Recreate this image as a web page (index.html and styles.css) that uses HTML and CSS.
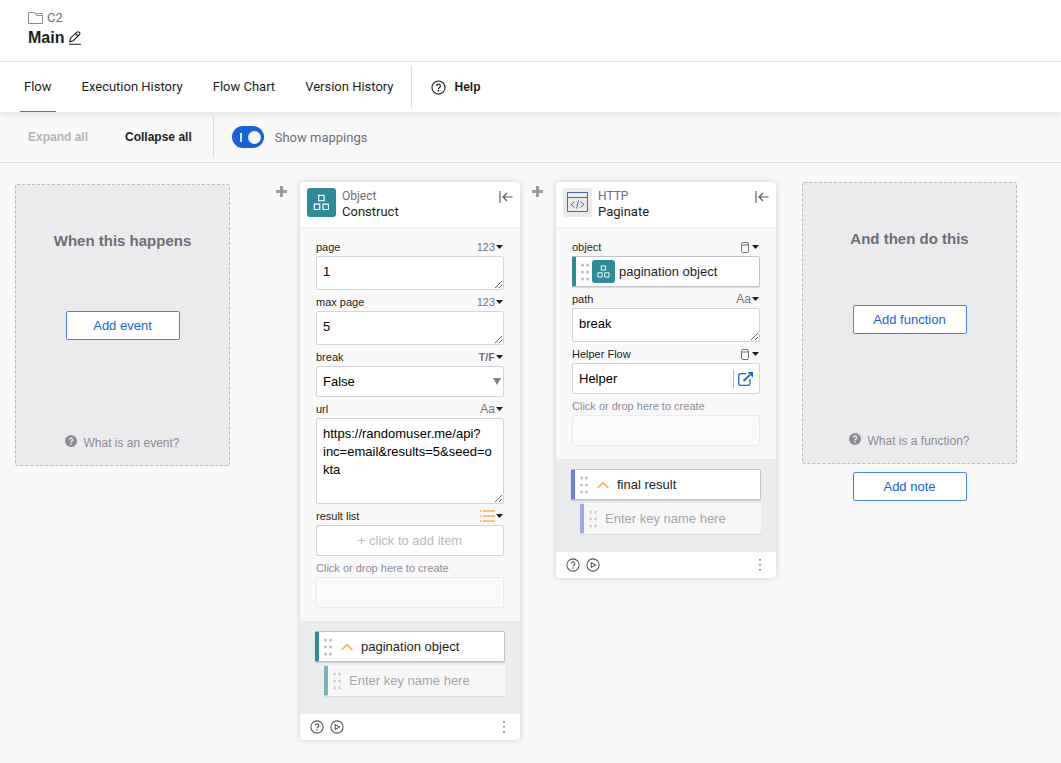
FILE: index.html
```html
<!DOCTYPE html>
<html lang="en">
<head>
  <meta charset="UTF-8">
  <title>Main - Flow</title>
  <link rel="stylesheet" href="styles.css">
</head>
<body>

  <!-- shared icons -->
  <svg class="sprite" aria-hidden="true">
    <symbol id="help" viewBox="0 0 16 16">
      <circle cx="8" cy="8" r="7" fill="none" stroke="currentColor" stroke-width="1.2"/>
      <path d="M6 6.400a2 2 0 1 1 2.900 1.800c-.6.3-.9.6-.9 1.300" fill="none" stroke="currentColor" stroke-width="1.300"/>
      <circle cx="8" cy="11.400" r=".9" fill="currentColor"/>
    </symbol>
    <symbol id="help-solid" viewBox="0 0 16 16">
      <circle cx="8" cy="8" r="8" fill="currentColor"/>
      <path d="M5.800 6.200a2.200 2.200 0 1 1 3.200 2c-.7.3-1 .6-1 1.400" fill="none" stroke="#ebebed" stroke-width="1.800"/>
      <circle cx="8" cy="11.900" r="1.100" fill="#ebebed"/>
    </symbol>
    <symbol id="play" viewBox="0 0 16 16">
      <circle cx="8" cy="8" r="7" fill="none" stroke="currentColor" stroke-width="1.200"/>
      <path d="M6 5.200v5.600L11 8z" fill="none" stroke="currentColor" stroke-width="1.200"/>
    </symbol>
    <symbol id="blocks" viewBox="0 0 30 30">
      <path d="M12.100 7.600h5.600v5.600h-5.600zM7.600 16.600h5.600v5.600H7.600zM16.600 16.600h5.600v5.600h-5.600z" fill="none" stroke="#fff" stroke-width="1.200"/>
    </symbol>
    <symbol id="collapse" viewBox="0 0 14 12">
      <path d="M1 0v12M13.500 6H4M8 2L4 6l4 4" fill="none" stroke="currentColor" stroke-width="1.100"/>
    </symbol>
    <symbol id="plus" viewBox="0 0 11 11">
      <path d="M5.500 0v11M0 5.500h11" stroke="currentColor" stroke-width="3"/>
    </symbol>
    <symbol id="caret" viewBox="0 0 7 4">
      <path d="M0 0h7L3.500 4z" fill="currentColor"/>
    </symbol>
    <symbol id="grip" viewBox="0 0 8 18">
      <g fill="currentColor">
        <circle cx="1.500" cy="2" r="1.500"/><circle cx="6.500" cy="2" r="1.500"/>
        <circle cx="1.500" cy="9" r="1.500"/><circle cx="6.500" cy="9" r="1.500"/>
        <circle cx="1.500" cy="16" r="1.500"/><circle cx="6.500" cy="16" r="1.500"/>
      </g>
    </symbol>
    <symbol id="chevron" viewBox="0 0 12 8">
      <path d="M.6 7L6 1.600 11.400 7" fill="none" stroke="#f9b04f" stroke-width="1.700"/>
    </symbol>
    <symbol id="cylinder" viewBox="0 0 8 11">
      <path d="M.5 1.800v7.700c0 .6.500 1 1.500 1h4c1 0 1.500-.4 1.500-1V1.800c0-.8-.5-1.300-1.500-1.300H2C1 .5.5 1 .5 1.800c0 .7.600 1.200 1.500 1.200h4c.9 0 1.500-.5 1.500-1.200" fill="none" stroke="currentColor"/>
    </symbol>
    <symbol id="dots" viewBox="0 0 2 12">
      <path d="M.3 0h1.400v1.500H.3zM.3 5h1.400v1.500H.3zM.3 10h1.400v1.500H.3z" fill="currentColor"/>
    </symbol>
  </svg>

  <header class="page-header">
    <div class="folder">
      <svg width="15" height="12" viewBox="0 0 15 12" fill="none" stroke="#8c8c8c"><path d="M.5 11.500V.5h6l2 3h6v8z"/><path d="M7 1.500h7.500v2"/></svg>
      <span>C2</span>
    </div>
    <div class="title">
      <h1>Main</h1>
      <button class="icon-btn" aria-label="Rename flow">
        <svg width="12" height="14" viewBox="0 0 12 14" fill="none" stroke="#1d1d21" stroke-width="1.100"><path d="M.8 10.500l.6-3.300L7.700 1.300c.8-.8 1.800-.8 2.600 0s.8 1.700 0 2.500L4 10z"/><path d="M6.500 2.500L9 5M0 13.300h12"/></svg>
      </button>
    </div>
  </header>

  <nav class="tabs">
    <a href="#flow" class="tab active">Flow</a>
    <a href="#history" class="tab">Execution History</a>
    <a href="#chart" class="tab">Flow Chart</a>
    <a href="#versions" class="tab">Version History</a>
    <span class="divider"></span>
    <a href="#help-page" class="help-link"><svg width="15" height="15"><use href="#help"/></svg>Help</a>
  </nav>

  <div class="toolbar">
    <button class="text-btn" disabled>Expand all</button>
    <button class="text-btn">Collapse all</button>
    <span class="divider"></span>
    <input type="checkbox" id="mappings" class="toggle" checked>
    <label for="mappings">Show mappings</label>
  </div>

  <main class="canvas">
    <section class="placeholder event">
      <h2>When this happens</h2>
      <button class="outline-btn">Add event</button>
      <a href="#event-help" class="hint"><svg width="12" height="12"><use href="#help-solid"/></svg>What is an event?</a>
    </section>

    <button class="add-btn" aria-label="Add step"><svg width="11" height="11"><use href="#plus"/></svg></button>

    <article class="card">
      <header class="card-header">
        <svg class="card-icon teal" width="29" height="29"><use href="#blocks"/></svg>
        <div class="card-title">
          <span class="app">Object</span>
          <h3>Construct</h3>
        </div>
        <button class="icon-btn collapse" aria-label="Collapse card"><svg width="14" height="12"><use href="#collapse"/></svg></button>
      </header>

      <div class="card-body">
        <div class="field-head">
          <label for="page">page</label>
          <button class="type">123<svg width="7" height="4"><use href="#caret"/></svg></button>
        </div>
        <textarea id="page" class="box">1</textarea>

        <div class="field-head">
          <label for="maxPage">max page</label>
          <button class="type">123<svg width="7" height="4"><use href="#caret"/></svg></button>
        </div>
        <textarea id="maxPage" class="box">5</textarea>

        <div class="field-head">
          <label for="break">break</label>
          <button class="type bold">T/F<svg width="7" height="4"><use href="#caret"/></svg></button>
        </div>
        <div class="select-wrap">
          <select id="break" class="box">
            <option>False</option>
            <option>True</option>
          </select>
          <svg width="8" height="7" viewBox="0 0 8 7"><path d="M0 0h8L4 7z" fill="#808080"/></svg>
        </div>

        <div class="field-head">
          <label for="url">url</label>
          <button class="type letters">Aa<svg width="7" height="4"><use href="#caret"/></svg></button>
        </div>
        <textarea id="url" class="box tall">https://randomuser.me/api?
inc=email&amp;results=5&amp;seed=o
kta</textarea>

        <div class="field-head">
          <label for="resultList">result list</label>
          <button class="type" aria-label="List type">
            <svg width="15" height="12" viewBox="0 0 15 12" stroke="#f9b04f" stroke-width="1.300"><path d="M3 1h12M3 6h12M3 11h12M0 1h1.500M0 6h1.500M0 11h1.500"/></svg>
            <svg width="7" height="4"><use href="#caret"/></svg>
          </button>
        </div>
        <button id="resultList" class="box add-item">+ click to add item</button>

        <div class="field-head">
          <label for="drop1" class="muted">Click or drop here to create</label>
        </div>
        <input type="text" id="drop1" class="box drop">
      </div>

      <div class="card-output teal-bar">
        <div class="chip">
          <svg class="grip" width="8" height="18"><use href="#grip"/></svg>
          <svg class="chevron" width="12" height="8"><use href="#chevron"/></svg>
          <input type="text" value="pagination object" aria-label="Output name">
        </div>
        <div class="chip child">
          <svg class="grip" width="8" height="18"><use href="#grip"/></svg>
          <input type="text" placeholder="Enter key name here" aria-label="Key name">
        </div>
      </div>

      <footer class="card-footer">
        <button class="icon-btn" aria-label="Help"><svg width="14" height="14"><use href="#help"/></svg></button>
        <button class="icon-btn" aria-label="Run"><svg width="14" height="14"><use href="#play"/></svg></button>
        <button class="icon-btn more" aria-label="More"><svg width="2" height="12"><use href="#dots"/></svg></button>
      </footer>
    </article>

    <button class="add-btn" aria-label="Add step"><svg width="11" height="11"><use href="#plus"/></svg></button>

    <article class="card">
      <header class="card-header">
        <svg class="card-icon gray" width="29" height="29" viewBox="0 0 29 29" fill="none" stroke="#4b68b0"><path d="M4.500 4.500h20v19h-20zM4.500 9.500h20"/><path d="M11.500 13.500L8 16.500l3.500 3M17.500 13.500l3.500 3-3.500 3M15.500 12.500l-2 8"/></svg>
        <div class="card-title">
          <span class="app">HTTP</span>
          <h3>Paginate</h3>
        </div>
        <button class="icon-btn collapse" aria-label="Collapse card"><svg width="14" height="12"><use href="#collapse"/></svg></button>
      </header>

      <div class="card-body">
        <div class="field-head">
          <span>object</span>
          <button class="type" aria-label="Object type"><svg class="db" width="8" height="11"><use href="#cylinder"/></svg><svg width="7" height="4"><use href="#caret"/></svg></button>
        </div>
        <div class="chip mapped teal-bar">
          <svg class="grip" width="8" height="18"><use href="#grip"/></svg>
          <svg class="mini teal" width="23" height="23"><use href="#blocks"/></svg>
          <span>pagination object</span>
        </div>

        <div class="field-head">
          <label for="path">path</label>
          <button class="type letters">Aa<svg width="7" height="4"><use href="#caret"/></svg></button>
        </div>
        <textarea id="path" class="box">break</textarea>

        <div class="field-head">
          <span>Helper Flow</span>
          <button class="type" aria-label="Object type"><svg class="db" width="8" height="11"><use href="#cylinder"/></svg><svg width="7" height="4"><use href="#caret"/></svg></button>
        </div>
        <div class="box linked">
          <span>Helper</span>
          <a href="#helper" aria-label="Open helper flow">
            <svg width="15" height="14" viewBox="0 0 15 14" fill="none" stroke="#1662dd" stroke-width="1.300"><path d="M8 1.700H2.500C1.500 1.700.7 2.500.7 3.500v8c0 1 .8 1.800 1.800 1.800h7.700c1 0 1.800-.8 1.800-1.800V7"/><path d="M5.500 9l6.500-6.200" stroke-width="1.800"/><path d="M9.500 0H15v5.500z" fill="#1662dd" stroke="none"/></svg>
          </a>
        </div>

        <div class="field-head">
          <label for="drop2" class="muted">Click or drop here to create</label>
        </div>
        <input type="text" id="drop2" class="box drop">
      </div>

      <div class="card-output indigo-bar">
        <div class="chip">
          <svg class="grip" width="8" height="18"><use href="#grip"/></svg>
          <svg class="chevron" width="12" height="8"><use href="#chevron"/></svg>
          <input type="text" value="final result" aria-label="Output name">
        </div>
        <div class="chip child">
          <svg class="grip" width="8" height="18"><use href="#grip"/></svg>
          <input type="text" placeholder="Enter key name here" aria-label="Key name">
        </div>
      </div>

      <footer class="card-footer">
        <button class="icon-btn" aria-label="Help"><svg width="14" height="14"><use href="#help"/></svg></button>
        <button class="icon-btn" aria-label="Run"><svg width="14" height="14"><use href="#play"/></svg></button>
        <button class="icon-btn more green" aria-label="More"><svg width="2" height="12"><use href="#dots"/></svg></button>
      </footer>
    </article>

    <div class="next">
      <section class="placeholder function">
        <h2>And then do this</h2>
        <button class="outline-btn">Add function</button>
        <a href="#function-help" class="hint"><svg width="12" height="12"><use href="#help-solid"/></svg>What is a function?</a>
      </section>
      <button class="outline-btn">Add note</button>
    </div>
  </main>

</body>
</html>
```
FILE: styles.css
```css
* {
  box-sizing: border-box;
}

body {
  margin: 0;
  min-height: 100vh;
  font-family: "Liberation Sans", Arial, sans-serif;
  font-size: 13px;
  color: #1d1d21;
  background-color: #f9f9f9;
}

h1, h2, h3 {
  margin: 0;
}

a {
  color: inherit;
  text-decoration: none;
}

button, input, select, textarea {
  font-family: inherit;
  font-size: 13px;
  color: inherit;
}

button {
  padding: 0;
  border: none;
  background: none;
  cursor: pointer;
}

svg {
  flex-shrink: 0;
}

.sprite {
  display: none;
}

.icon-btn {
  display: flex;
  color: #55555c;
}

.folder, .tab, .toolbar label, .card-title {
  font-family: Roboto, sans-serif;
}

/* header */
.page-header {
  height: 62px;
  padding: 9px 28px 0;
  background-color: #fff;
  border-bottom: 1px solid #e1e1e1;
}

.folder {
  display: flex;
  align-items: center;
  gap: 4px;
  line-height: 18px;
  color: #6e6e78;
}

.title {
  display: flex;
  align-items: center;
  gap: 5px;
}

.title h1 {
  font-size: 16px;
  font-weight: 700;
  line-height: 22px;
}

/* tabs */
.tabs {
  position: relative;
  display: flex;
  align-items: center;
  height: 50px;
  padding-left: 20px;
  background-color: #fff;
  box-shadow: 0 1px 8px rgba(0, 0, 0, 0.14);
  clip-path: inset(0 0 -12px 0);
}

.tab {
  height: 50px;
  line-height: 50px;
  padding: 0 4px;
  margin-right: 22px;
}

.tab.active {
  border-bottom: 1px solid #546be7;
}

.divider {
  width: 1px;
  height: 42px;
  background-color: #dcdcdc;
}

.tabs .divider {
  margin-left: -8px;
  margin-right: 19px;
}

.help-link {
  display: flex;
  align-items: center;
  gap: 8px;
  font-size: 12px;
  font-weight: 700;
}

/* toolbar */
.toolbar {
  display: flex;
  align-items: center;
  height: 51px;
  padding-left: 28px;
  border-bottom: 1px solid #dfdfdf;
}

.text-btn {
  margin-right: 37px;
  font-size: 12px;
  font-weight: 700;
}

.text-btn:disabled {
  color: #b4b4b8;
}

.toolbar .divider {
  margin-left: -16px;
  margin-right: 18px;
}

.toggle {
  appearance: none;
  display: flex;
  align-items: center;
  justify-content: space-between;
  width: 32px;
  height: 22px;
  margin: 0 11px 0 0;
  padding: 0 3px 0 8px;
  border-radius: 11px;
  background-color: #1662dd;
}

.toggle::before {
  content: "";
  width: 2px;
  height: 9px;
  background-color: #dfe9fb;
}

.toggle::after {
  content: "";
  width: 13px;
  height: 13px;
  border-radius: 50%;
  background-color: #f5f5f6;
}

.toolbar label {
  color: #6e6e78;
}

/* canvas */
.canvas {
  display: flex;
  align-items: flex-start;
  padding: 19px 15px 22px;
}

.placeholder {
  display: flex;
  flex-direction: column;
  align-items: center;
  flex-shrink: 0;
  width: 215px;
  height: 282px;
  padding: 45px 0 14px;
  background-color: #ebebed;
  border: 1px dashed #bdbdbd;
  border-radius: 2px;
}

.placeholder.event {
  margin-top: 2px;
  margin-right: 46px;
}

.placeholder h2 {
  font-size: 15px;
  font-weight: 700;
  line-height: 22px;
  color: #6e6e78;
}

.outline-btn {
  width: 114px;
  height: 29px;
  color: #1662dd;
  background-color: #fff;
  border: 1px solid #4a84e4;
  border-radius: 2px;
}

.placeholder .outline-btn {
  margin-top: 59px;
}

.placeholder.function .outline-btn {
  margin-top: 55px;
}

.hint {
  display: flex;
  align-items: flex-start;
  gap: 6px;
  margin-top: auto;
  font-size: 12px;
  line-height: 16px;
  color: #8c8c96;
}

.next {
  display: flex;
  flex-direction: column;
  align-items: center;
  gap: 8px;
  margin-left: 26px;
}

.add-btn {
  display: flex;
  margin-top: 4px;
  color: #9b9b9b;
}

/* step cards */
.card {
  flex-shrink: 0;
  width: 220px;
  margin-left: 13px;
  overflow: hidden;
  background-color: #f9f9f9;
  border-radius: 4px;
  box-shadow: 0 0 6px rgba(0, 0, 0, 0.18);
}

.card + .add-btn {
  margin-left: 12px;
}

.card-header {
  display: flex;
  align-items: flex-start;
  gap: 6px;
  height: 46px;
  padding: 6px 7px;
  background-color: #fff;
  border-bottom: 1px solid #f0f0f0;
}

.card-icon, .mini {
  border-radius: 3px;
}

.teal {
  background-color: #2e8c9a;
}

.gray {
  background-color: #ebebed;
}

.card-title {
  flex: 1;
  line-height: 16px;
}

.card-title .app {
  display: block;
  font-size: 12px;
  color: #6e6e78;
}

.card-title h3 {
  font-size: 13px;
  font-weight: 400;
}

.collapse {
  margin-top: 3px;
}

.card-body {
  padding: 7px 16px 13px;
}

.field-head {
  display: flex;
  align-items: center;
  justify-content: space-between;
  height: 21px;
  padding-top: 3px;
  font-size: 11px;
}

.muted {
  color: #8c8c96;
}

.type {
  display: flex;
  align-items: center;
  gap: 1px;
  padding-right: 1px;
  font-size: 11px;
  color: #72727f;
}

.type.bold {
  font-weight: 700;
}

.type.letters {
  font-size: 12px;
}

.type svg:last-child {
  color: #1d1d21;
}

.db {
  margin-right: 2px;
}

.box {
  display: block;
  width: 100%;
  height: 31px;
  padding: 0 6px;
  color: #000;
  background-color: #fff;
  border: 1px solid #d4d4d6;
  border-radius: 2px;
}

textarea.box {
  height: 34px;
  padding: 6px 1px 6px 6px;
  line-height: 18px;
  resize: vertical;
  overflow: hidden;
}

textarea.tall {
  height: 86px;
}

.select-wrap {
  position: relative;
}

.select-wrap select {
  appearance: none;
}

.select-wrap svg {
  position: absolute;
  right: 3px;
  top: 12px;
  pointer-events: none;
}

.add-item {
  text-align: center;
  color: #b9b9bd;
}

.drop {
  background-color: #fbfbfb;
  border-color: #ececec;
}

.linked {
  display: flex;
  align-items: center;
  justify-content: space-between;
}

.linked a {
  display: flex;
  padding: 2px 0 2px 4px;
  border-left: 1px solid #b4b4b8;
}

/* chips */
.chip {
  display: flex;
  align-items: center;
  height: 31px;
  padding: 0 6px 0 5px;
  color: #1d1d21;
  background-color: #fff;
  border: 1px solid #c4c4c6;
  border-left: 4px solid var(--bar);
  border-radius: 2px;
  box-shadow: 0 1px 1px rgba(0, 0, 0, 0.12);
}

.teal-bar {
  --bar: #2e8c9a;
}

.indigo-bar {
  --bar: #6e7fe0;
}

.chip input {
  flex: 1;
  min-width: 0;
  padding: 0;
  border: none;
  outline: none;
  background: none;
}

.chip input::placeholder {
  color: #77777c;
}

.grip {
  color: #bfbfc2;
}

.chevron {
  margin: 0 8px 0 9px;
}

.mini {
  margin: 0 4px 0 3px;
}

.card-output {
  padding: 10px 15px 18px;
  background-color: #ebecee;
}

.chip.child {
  margin: 3px 0 0 9px;
  opacity: 0.6;
  border-color: transparent;
  border-left-color: var(--bar);
}

.child .grip {
  margin-right: 8px;
}

.card-footer {
  display: flex;
  align-items: center;
  gap: 6px;
  height: 26px;
  padding: 0 15px 0 10px;
  background-color: #fff;
}

.more {
  margin-left: auto;
}

.more.green {
  color: #1f8a4c;
}
```
